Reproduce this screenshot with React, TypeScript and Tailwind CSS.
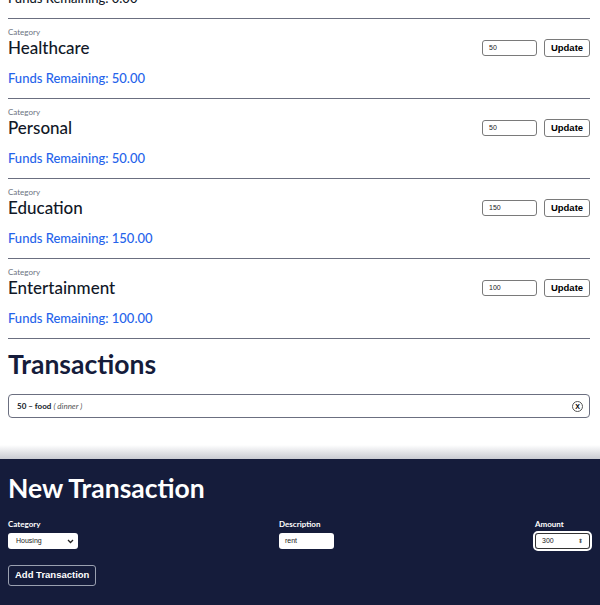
import React from "react";

const cats = [
  { name: "Healthcare", amt: "50", rem: "50.00" },
  { name: "Personal", amt: "50", rem: "50.00" },
  { name: "Education", amt: "150", rem: "150.00" },
  { name: "Entertainment", amt: "100", rem: "100.00" },
];

const sans = { fontFamily: 'Lato, "Noto Sans", sans-serif' };
const arial = { fontFamily: '"Liberation Sans", Arial, sans-serif' };

function Section({ name, amt, rem }: { name: string; amt: string; rem: string }) {
  return (
    <div className="border-t border-[#6b6f80] pt-[8px] pb-[12px]">
      <div className="text-[8px] leading-[10px] text-[#6b7280]">Category</div>
      <div className="mt-[1px] flex h-[20px] items-center justify-between">
        <div className="text-[17px] font-medium leading-[20px] text-[#111827]">{name}</div>
        <div className="flex items-center gap-[7px]" style={arial}>
          <div className="flex h-[16px] w-[55px] items-center rounded-[3px] border border-[#7a7a7a] px-[6px] text-[7px] text-[#222]">
            {amt}
          </div>
          <div className="flex h-[18px] w-[46px] items-center justify-center rounded-[3px] border border-[#7a7a7a] bg-white text-[9.5px] font-bold text-black">
            Update
          </div>
        </div>
      </div>
      <div className="mt-[12px] text-[13px] font-medium leading-[16px] text-[#2563eb]">Funds Remaining: {rem}</div>
    </div>
  );
}

export default function App() {
  return (
    <div className="h-[605px] w-[600px] overflow-hidden bg-white" style={sans}>
      <div className="mt-[-10px] pl-[8px] pr-[10px]">
        <div className="pb-[12px] text-[13px] font-medium leading-[16px] text-[#111827]">Funds Remaining: 0.00</div>
        {cats.map((c) => (
          <Section key={c.name} {...c} />
        ))}
        <div className="border-t border-[#6b6f80]">
          <h2 className="mt-[9px] text-[26.5px] font-bold leading-[32px] text-[#151c3b]">Transactions</h2>
          <div className="mt-[14px] flex h-[24px] items-center justify-between rounded-[4px] border border-[#6b6f80] pl-[8px] pr-[6px]">
            <div className="text-[8px] text-[#111827]">
              <span className="font-bold">50 – food</span>{" "}
              <span className="italic text-[#555]">( dinner )</span>
            </div>
            <div
              className="flex h-[11px] w-[11px] items-center justify-center rounded-full border border-[#555] text-[7px] font-bold leading-none text-black"
              style={arial}
            >
              X
            </div>
          </div>
        </div>
      </div>
      <div className="mt-[27px] h-[14px] bg-gradient-to-b from-white to-[#c9cbd2]" />
      <div className="h-[200px] bg-[#151c3b] pl-[8px] pr-[10px] pt-[13px]">
        <h2 className="text-[26.5px] font-bold leading-[32px] text-white">New Transaction</h2>
        <div className="mt-[15px] flex justify-between">
          <div className="flex flex-col">
            <div className="text-[8px] font-bold leading-[10px] text-white">Category</div>
            <div
              className="mt-[4px] flex h-[16px] w-[70px] items-center justify-between rounded-[3px] bg-white pl-[8px] pr-[4px] text-[7px] text-[#222]"
              style={arial}
            >
              <span>Housing</span>
              <svg width="7" height="5" viewBox="0 0 7 5">
                <path d="M1 1l2.5 2.5L6 1" stroke="#222" strokeWidth="1.3" fill="none" />
              </svg>
            </div>
          </div>
          <div className="flex flex-col">
            <div className="text-[8px] font-bold leading-[10px] text-white">Description</div>
            <div
              className="mt-[4px] flex h-[16px] w-[55px] items-center rounded-[3px] bg-white px-[6px] text-[7px] text-[#222]"
              style={arial}
            >
              rent
            </div>
          </div>
          <div className="flex flex-col">
            <div className="text-[8px] font-bold leading-[10px] text-white">Amount</div>
            <div
              className="mt-[4px] flex h-[16px] w-[55px] items-center justify-between rounded-[3px] border border-[#333] bg-white pl-[6px] pr-[6px] text-[7px] text-[#222] outline outline-[2px] outline-white"
              style={arial}
            >
              <span>300</span>
              <span className="text-[6px] leading-none text-[#555]">⬍</span>
            </div>
          </div>
        </div>
        <div
          className="mt-[16px] inline-flex h-[21px] items-center rounded-[3px] border border-[#9aa0b0] px-[6px] text-[9.5px] font-bold text-white"
          style={arial}
        >
          Add Transaction
        </div>
      </div>
    </div>
  );
}
